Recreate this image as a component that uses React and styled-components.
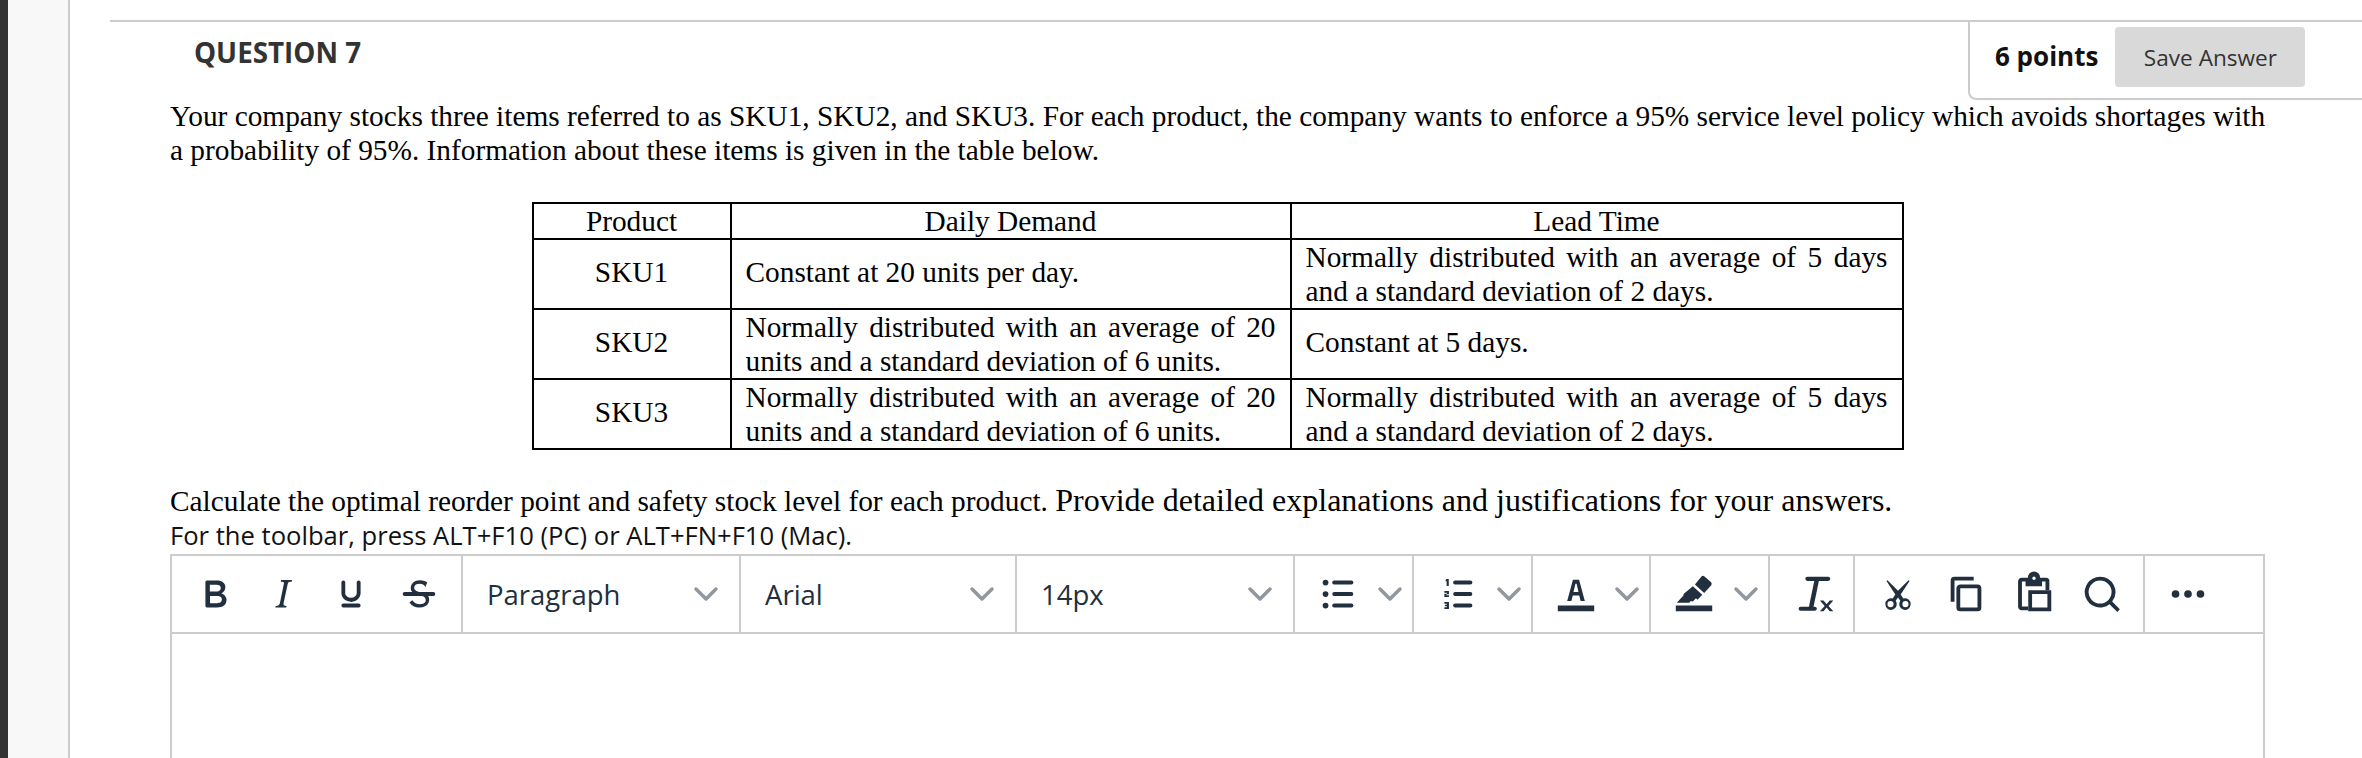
import React from 'react'
import styled, { createGlobalStyle } from 'styled-components'

const INK = '#222f3e'
const LINE = '#cccccc'

const GlobalStyle = createGlobalStyle`
  html, body {
    margin: 0;
    padding: 0;
    background: #fff;
    overflow: hidden;
  }
`

const Page = styled.div`
  display: flex;
  width: 2362px;
  height: 758px;
  overflow: hidden;
`

const DarkStrip = styled.div`
  width: 8px;
  flex: none;
  background: #333333;
`

const Gutter = styled.div`
  width: 60px;
  flex: none;
  background: #f8f8f8;
  border-right: 2px solid ${LINE};
`

const Main = styled.main`
  flex: 1;
  min-width: 0;
  padding: 20px 0 0 40px;
`

const Question = styled.section`
  border-top: 2px solid ${LINE};
`

const QuestionHeader = styled.header`
  display: flex;
  justify-content: space-between;
  align-items: flex-start;
  height: 78px;
`

const Title = styled.h2`
  margin: 13px 0 0 84px;
  font: 700 27.8px/34px 'Open Sans', sans-serif;
  color: #333333;
`

const PointsBox = styled.div`
  display: flex;
  align-items: center;
  width: 394px;
  height: 78px;
  box-sizing: border-box;
  padding-left: 25px;
  border-left: 2px solid ${LINE};
  border-bottom: 2px solid ${LINE};
  border-bottom-left-radius: 8px;
`

const Points = styled.span`
  font: 700 26px/34px 'Open Sans', sans-serif;
  color: #111111;
  margin: -8px 17px 0 0;
`

const SaveButton = styled.button`
  width: 190px;
  height: 60px;
  margin-top: -6px;
  padding: 0;
  border: 0;
  border-radius: 4px;
  background: #d9d9d9;
  color: #333333;
  font: 400 22.6px 'Open Sans', sans-serif;
`

const Body = styled.div`
  width: 2095px;
  margin-left: 60px;
`

const Paragraph = styled.p`
  margin: 0 -8px 0 0;
  font: 400 29.33px/33.5px 'Liberation Serif', serif;
  color: #000;
`

const GridTable = styled.table`
  margin: 35px auto 0;
  width: 1370px;
  table-layout: fixed;
  border-collapse: collapse;
  font: 400 29.33px/34px 'Liberation Serif', serif;
  color: #000;

  th {
    height: 34px;
    line-height: 33px;
    padding: 0 14px;
    border: 2.5px solid #000;
    font-weight: 400;
    text-align: center;
  }
`

const Cell = styled.td`
  height: ${p => (p.$single ? 64 : 68)}px;
  padding: 0 14px ${p => (p.$single ? 4 : 0)}px;
  border: 2.5px solid #000;
  text-align: ${p => (p.$center ? 'center' : 'justify')};
`

const Prompt = styled.p`
  margin: 31px 0 0;
  font: 400 29.33px/38px 'Liberation Serif', serif;
  color: #000;
`

const Larger = styled.span`
  font-size: 32px;
`

const Hint = styled.div`
  margin-bottom: 3px;
  font: 400 25.6px/31px 'Open Sans', sans-serif;
  color: #111111;
`

const Editor = styled.div`
  height: 220px;
  border: 2px solid ${LINE};
  border-bottom: 0;
`

const Toolbar = styled.div`
  display: flex;
  height: 76px;
  border-bottom: 2px solid ${LINE};
`

const Group = styled.div`
  display: flex;
  align-items: center;
  flex: none;
  width: ${p => p.$width}px;
  padding-left: ${p => p.$pad ?? 0}px;
  box-sizing: border-box;
  border-right: ${p => (p.$last ? 0 : `2px solid ${LINE}`)};
`

const IconButton = styled.span`
  display: flex;
  align-items: center;
  justify-content: center;
  width: 68px;
  height: 76px;
  color: ${INK};
`

const Split = styled.span`
  display: flex;
  align-items: center;
  padding-left: 20px;
  color: ${INK};
`

const SelectBox = styled.span`
  display: flex;
  align-items: center;
  justify-content: space-between;
  width: 100%;
  padding: 0 18px 0 24px;
  font: 400 27.5px 'Open Sans', sans-serif;
  color: ${INK};
`

const Icon = styled.svg`
  display: block;
  width: 46px;
  height: 46px;
  flex: none;
  fill: currentColor;
`

const Chevron = styled.svg`
  display: block;
  width: 30px;
  height: 30px;
  flex: none;
  margin-left: ${p => p.$gap ?? 0}px;
  fill: none;
  stroke: ${INK};
  stroke-opacity: 0.5;
  stroke-width: 2.8;
  stroke-linecap: round;
  stroke-linejoin: round;
`

const Caret = ({ gap }) => (
  <Chevron viewBox="0 0 24 24" $gap={gap}>
    <path d="M4 8l8 8 8-8" />
  </Chevron>
)

const Glyph = ({ children }) => <Icon viewBox="0 0 24 24">{children}</Icon>

const Bold = () => (
  <Glyph>
    <path fillRule="evenodd" d="M7.8 19c-.3 0-.5 0-.6-.2l-.2-.5V5.7c0-.2 0-.4.2-.5l.6-.2h5c1.5 0 2.7.3 3.5 1 .7.6 1.1 1.4 1.1 2.5a3 3 0 0 1-.6 1.9c-.4.6-1 1-1.6 1.2.4.1.9.3 1.3.6s.8.7 1 1.2c.4.4.5 1 .5 1.6 0 1.3-.4 2.3-1.3 3-.8.7-2.1 1-3.8 1H7.8zm5-8.3c.6 0 1.2-.1 1.6-.5.4-.3.6-.7.6-1.3 0-1.1-.8-1.7-2.3-1.7H9.3v3.5h3.4zm.5 6c.7 0 1.3-.1 1.7-.4.4-.4.6-.9.6-1.5s-.2-1-.7-1.4c-.4-.3-1-.4-2-.4H9.4v3.8h4z" />
  </Glyph>
)

const Italic = () => (
  <Glyph>
    <path fillRule="evenodd" d="M16.7 4.7l-.1.9h-.3c-.6 0-1 0-1.4.3-.3.3-.4.6-.5 1.1l-2.1 9.8v.6c0 .5.4.8 1.4.8h.2l-.2.8H8l.2-.8h.2c1.1 0 1.8-.5 2-1.5l2-9.8.1-.5c0-.6-.4-.8-1.4-.8h-.3l.2-.9h5.8z" />
  </Glyph>
)

const Underline = () => (
  <Glyph>
    <path fillRule="evenodd" d="M16 5c.6 0 1 .4 1 1v5.5a4 4 0 0 1-.4 1.8l-1 1.4a5.3 5.3 0 0 1-5.5 1 5 5 0 0 1-1.6-1c-.5-.4-.8-.9-1.1-1.4a4 4 0 0 1-.4-1.8V6c0-.6.4-1 1-1s1 .4 1 1v5.5c0 .3 0 .6.2 1l.6.7a3.3 3.3 0 0 0 2.2.8 3.4 3.4 0 0 0 2.2-.8c.3-.2.4-.5.6-.8l.2-.9V6c0-.6.4-1 1-1zM8 17h8c.6 0 1 .4 1 1s-.4 1-1 1H8a1 1 0 0 1 0-2z" />
  </Glyph>
)

const Strike = () => (
  <Glyph>
    <path d="M15.6 8.5c-.5-.7-1-1.1-1.3-1.3-.6-.4-1.3-.6-2-.6-2.7 0-2.8 1.7-2.8 2.1 0 1.6 1.8 2 3.2 2.3 4.4.9 4.6 2.8 4.6 3.9 0 1.4-.7 4.1-5 4.1A6.2 6.2 0 0 1 7 16.4l1.5-1.1c.4.6 1.6 2 3.7 2 1.6 0 2.5-.4 3-1 .3-.4.3-.8.3-1.2 0-1.6-1.8-2.1-3.2-2.4-3.7-.7-4.6-2.2-4.6-3.8 0-2.3 1.9-4.1 4.8-4.1 1.7 0 3 .5 3.8 1.2l-.7 1.5z" />
    <rect x="3.5" y="11" width="17" height="2" rx="1" />
  </Glyph>
)

const BulletList = () => (
  <Glyph>
    <rect x="9" y="5" width="11" height="2" rx="1" />
    <rect x="9" y="11" width="11" height="2" rx="1" />
    <rect x="9" y="17" width="11" height="2" rx="1" />
    <circle cx="5.5" cy="6" r="1.5" />
    <circle cx="5.5" cy="12" r="1.5" />
    <circle cx="5.5" cy="18" r="1.5" />
  </Glyph>
)

const NumberList = () => (
  <Glyph>
    <rect x="10" y="5" width="10" height="2" rx="1" />
    <rect x="10" y="11" width="10" height="2" rx="1" />
    <rect x="10" y="17" width="10" height="2" rx="1" />
    <path d="M6.4 4.2h1.3v3.6H6.6V5.3h-.7z" />
    <path d="M5.4 10.4h2.4v1.7H6.5v.6h1.3v.9H5.4v-1.7h1.3v-.6H5.4z" />
    <path d="M5.4 16.2h2.4v3.6H5.4v-.9h1.3v-.5H5.7v-.8h1v-.5H5.4z" />
  </Glyph>
)

const TextColor = () => (
  <Glyph>
    <path d="M2.5 18H21.5v3H2.5z" />
    <path fillRule="evenodd" d="M10.4 4.6h3.2l3 11h-2.2l-.7-2.8h-3.4l-.7 2.8h-2.2zm.3 6.4h2.6L12.3 6.6h-.6z" />
  </Glyph>
)

const Highlighter = () => (
  <Glyph>
    <path d="M2.5 18H21.5v3H2.5z" />
    <path d="M17.3 2.7l3.5 3.1c.5.5.6 1.2.1 1.7l-3.6 4-4.8-4.4 3.4-4.2c.5-.6 1-.6 1.4-.2z" />
    <path d="M11.4 7.9l4.9 4.5-2.4 2.6-.9-.8-1.6 1.7-1-.3-.9.9H3l3.4-3.6.3-1z" />
  </Glyph>
)

const ClearFormat = () => (
  <Glyph>
    <rect x="8" y="3" width="13" height="2.2" rx="1.1" />
    <rect x="4.5" y="18.6" width="9.5" height="2.2" rx="1.1" />
    <path d="M12.9 4h2.4l-3.2 15.6H9.7z" />
    <path d="M15.6 15.4h1.9l1.6 1.9 1.6-1.9h1.9l-2.5 2.8 2.5 2.8h-1.9l-1.6-1.9-1.6 1.9h-1.9l2.5-2.8z" />
  </Glyph>
)

const Cut = () => (
  <Glyph>
    <path fillRule="evenodd" d="M18 5.2l-4.6 7.1 1.4 2.1a3 3 0 1 1-1.6 1.1L12 13.8l-1.2 1.7a3 3 0 1 1-1.6-1.1l1.4-2.1L6 5.2l.5-.4 5.5 5.5 5.5-5.5zM8.1 15.7a1.6 1.6 0 1 0 0 3.2 1.6 1.6 0 0 0 0-3.2zm7.8 0a1.6 1.6 0 1 0 0 3.2 1.6 1.6 0 0 0 0-3.2z" />
  </Glyph>
)

const Copy = () => (
  <Glyph>
    <path d="M16 3H6a2 2 0 0 0-2 2v11h2V5h10V3z" />
    <path fillRule="evenodd" d="M9 7h9a2 2 0 0 1 2 2v10a2 2 0 0 1-2 2H9a2 2 0 0 1-2-2V9c0-1.1.9-2 2-2zm0 2v10h9V9H9z" />
  </Glyph>
)

const Paste = () => (
  <Glyph>
    <path fillRule="evenodd" d="M5.6 3.5h3.2a3.2 3.2 0 0 1 6.4 0h3.2c1 0 1.6.7 1.6 1.6V10h-2V5.5h-1.8V8H7.6V5.5H5.7v13H9v2H5.6c-1 0-1.9-.8-1.9-1.9V5.4c0-1 .9-1.9 1.9-1.9zM12 2.9a.9.9 0 1 0 0 1.8.9.9 0 0 0 0-1.8z" />
    <path fillRule="evenodd" d="M9 10h12v11H9zm2 2v7h8v-7z" />
  </Glyph>
)

const Search = () => (
  <Glyph>
    <path fillRule="evenodd" d="M11 3a8 8 0 0 1 6.3 12.9l4 4.1-1.3 1.4-4.1-4.1A8 8 0 1 1 11 3zm0 2a6 6 0 1 0 0 12 6 6 0 0 0 0-12z" />
  </Glyph>
)

const More = () => (
  <Glyph>
    <circle cx="5.5" cy="12" r="2" />
    <circle cx="12" cy="12" r="2" />
    <circle cx="18.5" cy="12" r="2" />
  </Glyph>
)

const rows = [
  ['SKU1', 'Constant at 20 units per day.', 'Normally distributed with an average of 5 days and a standard deviation of 2 days.'],
  ['SKU2', 'Normally distributed with an average of 20 units and a standard deviation of 6 units.', 'Constant at 5 days.'],
  ['SKU3', 'Normally distributed with an average of 20 units and a standard deviation of 6 units.', 'Normally distributed with an average of 5 days and a standard deviation of 2 days.'],
]

const App = () => (
  <Page>
    <GlobalStyle />
    <DarkStrip />
    <Gutter />
    <Main>
      <Question>
        <QuestionHeader>
          <Title>QUESTION 7</Title>
          <PointsBox>
            <Points>6 points</Points>
            <SaveButton>Save Answer</SaveButton>
          </PointsBox>
        </QuestionHeader>
        <Body>
          <Paragraph>
            Your company stocks three items referred to as SKU1, SKU2, and SKU3. For each product, the company wants to enforce a 95% service level policy which avoids shortages with a probability of 95%. Information about these items is given in the table below.
          </Paragraph>
          <GridTable>
            <colgroup>
              <col style={{ width: 198 }} />
              <col style={{ width: 560 }} />
              <col style={{ width: 612 }} />
            </colgroup>
            <thead>
              <tr>
                <th>Product</th>
                <th>Daily Demand</th>
                <th>Lead Time</th>
              </tr>
            </thead>
            <tbody>
              {rows.map(row => (
                <tr key={row[0]}>
                  {row.map((cell, i) => (
                    <Cell key={cell} $center={i === 0} $single={cell.length < 30}>{cell}</Cell>
                  ))}
                </tr>
              ))}
            </tbody>
          </GridTable>
          <Prompt>
            Calculate the optimal reorder point and safety stock level for each product. <Larger>Provide detailed explanations and justifications for your answers.</Larger>
          </Prompt>
          <Hint>For the toolbar, press ALT+F10 (PC) or ALT+FN+F10 (Mac).</Hint>
          <Editor>
            <Toolbar>
              <Group $width={291} $pad={9}>
                <IconButton><Bold /></IconButton>
                <IconButton><Italic /></IconButton>
                <IconButton><Underline /></IconButton>
                <IconButton><Strike /></IconButton>
              </Group>
              <Group $width={278}>
                <SelectBox>Paragraph<Caret /></SelectBox>
              </Group>
              <Group $width={276}>
                <SelectBox>Arial<Caret /></SelectBox>
              </Group>
              <Group $width={278}>
                <SelectBox>14px<Caret /></SelectBox>
              </Group>
              <Group $width={119}>
                <Split><BulletList /><Caret gap={14} /></Split>
              </Group>
              <Group $width={119}>
                <Split><NumberList /><Caret gap={14} /></Split>
              </Group>
              <Group $width={118}>
                <Split><TextColor /><Caret gap={13} /></Split>
              </Group>
              <Group $width={119}>
                <Split><Highlighter /><Caret gap={14} /></Split>
              </Group>
              <Group $width={85} $pad={9}>
                <IconButton><ClearFormat /></IconButton>
              </Group>
              <Group $width={290} $pad={9}>
                <IconButton><Cut /></IconButton>
                <IconButton><Copy /></IconButton>
                <IconButton><Paste /></IconButton>
                <IconButton><Search /></IconButton>
              </Group>
              <Group $width={120} $pad={9} $last>
                <IconButton><More /></IconButton>
              </Group>
            </Toolbar>
          </Editor>
        </Body>
      </Question>
    </Main>
  </Page>
)

export default App
